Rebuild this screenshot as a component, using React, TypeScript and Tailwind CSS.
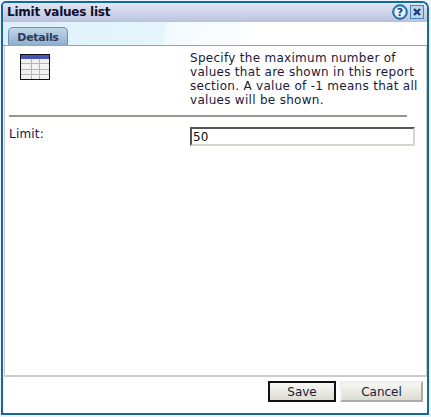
function App() {
  return (
    <div className="w-[431px] h-[417px] bg-[#eef3fa] pt-[1px] pl-[1px] pr-[2px] pb-[2px] font-['DejaVu_Sans',sans-serif] text-[12px] text-[#1a1a3a]">
      <div className="w-full h-full border-2 border-[#13689f] rounded-tl-[5px] rounded-tr-[7px] bg-white flex flex-col overflow-hidden">
        <div className="h-[19px] shrink-0 flex items-center justify-between bg-gradient-to-b from-[#e2e5f2] to-[#bcc5e0] border-b border-[#b4c0dd] pl-[4px] pr-[3px]">
          <span className="text-[12px] font-bold text-[#101030] leading-none tracking-[-0.25px]">Limit values list</span>
          <div className="flex items-center gap-[2px]">
            <svg width="16" height="16" viewBox="0 0 16 16">
              <circle cx="8" cy="8" r="7.3" fill="#3b87c8" stroke="#1a5d9e" />
              <circle cx="8" cy="8" r="5.6" fill="#e6f1fa" />
              <text x="8" y="12" textAnchor="middle" fontSize="11" fontWeight="bold" fill="#1b3f86" fontFamily="DejaVu Sans">?</text>
            </svg>
            <svg width="14" height="14" viewBox="0 0 14 14">
              <rect x="0.5" y="0.5" width="13" height="13" fill="#b9d6ec" stroke="#3f86bb" />
              <path d="M4 4 L10 10 M10 4 L4 10" stroke="#1f3f80" strokeWidth="2.4" />
            </svg>
          </div>
        </div>
        <div className="h-[24px] shrink-0 flex items-end pl-[5px] border-b border-[#8ba6bc] bg-[linear-gradient(100deg,#dcf0fb_0%,#e6f5fc_38%,#f3fafd_38.5%,#fafdfe_55%,#ffffff_60%)]">
          <div className="w-[60px] h-[18px] flex items-center justify-center rounded-t-[5px] border border-b-0 border-[#6f92ae] bg-gradient-to-b from-[#c2d6e8] to-[#8eb0cd] text-[11px] font-bold text-[#2e3b58] leading-none pt-[1px] tracking-[-0.3px]">
            Details
          </div>
        </div>
        <div className="flex-1 ml-[1px] border-b-2 border-l border-r border-[#cccccc] flex flex-col pl-[4px]">
          <div className="flex h-[69px]">
            <div className="w-[181px] pl-[11px] pt-[8px] shrink-0">
              <svg width="30" height="26" viewBox="0 0 30 26">
                <rect x="0.5" y="0.5" width="29" height="25" fill="#f2f2f2" stroke="#111" />
                <rect x="1" y="1" width="28" height="4" fill="#4655b8" />
                <path d="M1 9.5H29M1 15.5H29M1 20.5H29M11.5 5V25M19.5 5V25" stroke="#b5b5b5" />
              </svg>
            </div>
            <p className="w-[234px] shrink-0 pt-[5px] leading-[14px] text-[12px] tracking-[0.29px]">
              Specify the maximum number of values that are shown in this report section. A value of -1 means that all values will be shown.
            </p>
          </div>
          <div className="h-[2px] w-[398px] bg-[#99948f]" />
          <div className="flex mt-[10px]">
            <div className="w-[181px] shrink-0 -mt-[2px] text-[#2a1040] tracking-[0.2px]">Limit:</div>
            <div className="w-[225px] h-[19px] shrink-0 border-2 border-t-[#555555] border-l-[#555555] border-r-[#d8d5cc] border-b-[#d8d5cc] flex items-center pl-[1px] text-[12px] text-[#111] bg-white">
              50
            </div>
          </div>
        </div>
        <div className="h-[36px] shrink-0 flex items-start justify-end gap-[4px] pt-[4px] pr-[4px]">
          <button className="w-[68px] h-[21px] border-2 border-[#111] bg-gradient-to-b from-[#f8f8f4] to-[#dcdcd2] text-[12px] text-[#1a1a3a] leading-none">Save</button>
          <button className="w-[83px] h-[21px] border-2 border-t-[#eeeeee] border-l-[#eeeeee] border-r-[#aaaaaa] border-b-[#aaaaaa] bg-gradient-to-b from-[#f8f8f4] to-[#dcdcd2] text-[12px] text-[#1a1a3a] leading-none">Cancel</button>
        </div>
      </div>
    </div>
  );
}

export default App;
